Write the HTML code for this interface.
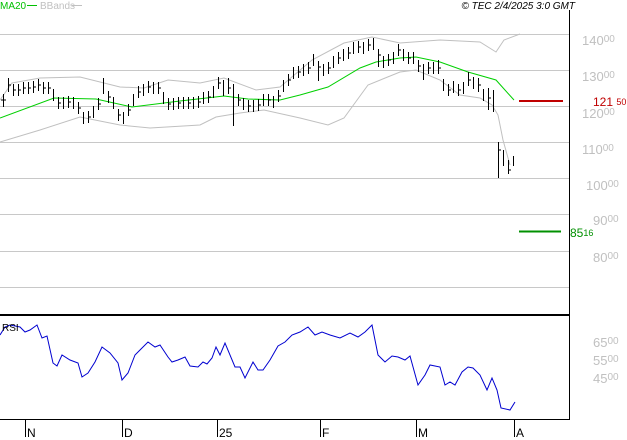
<!DOCTYPE html>
<html><head><meta charset="utf-8"><style>
body{margin:0;background:#fff}
svg{display:block;font-family:"Liberation Sans",sans-serif}
.g{fill:#c0c0c0;font-size:13px}
.s{font-size:10px}
</style></head><body>
<svg width="627" height="440" viewBox="0 0 627 440" xmlns="http://www.w3.org/2000/svg">
<g stroke="#c8c8c8" stroke-width="1">
<line x1="0" y1="34.5" x2="569" y2="34.5"/><line x1="0" y1="70.5" x2="569" y2="70.5"/>
<line x1="0" y1="106.5" x2="569" y2="106.5"/><line x1="0" y1="142.5" x2="569" y2="142.5"/>
<line x1="0" y1="178.5" x2="569" y2="178.5"/><line x1="0" y1="214.5" x2="569" y2="214.5"/>
<line x1="0" y1="251.5" x2="569" y2="251.5"/><line x1="0" y1="287.5" x2="569" y2="287.5"/>
</g>
<line x1="569.5" y1="10" x2="569.5" y2="420" stroke="#000"/>
<line x1="0" y1="315" x2="570" y2="315" stroke="#000" stroke-width="2"/>
<line x1="0" y1="419.5" x2="570" y2="419.5" stroke="#000"/>
<g stroke="#000"><line x1="25.5" y1="419" x2="25.5" y2="437"/><line x1="122.5" y1="419" x2="122.5" y2="437"/><line x1="217.5" y1="419" x2="217.5" y2="437"/><line x1="320.5" y1="419" x2="320.5" y2="437"/><line x1="416.5" y1="419" x2="416.5" y2="437"/><line x1="514.5" y1="419" x2="514.5" y2="437"/></g>
<g font-size="12" fill="#000"><text x="27" y="437">N</text><text x="124" y="437">D</text><text x="219" y="437">25</text><text x="322" y="437">F</text><text x="418" y="437">M</text><text x="516" y="437">A</text></g>
<polyline fill="none" stroke="#c0c0c0" points="0,100 12,83 40,78 80,77 120,87 144,88 168,80 200,83 224,78 256,90 280,87 312,60 344,43 372,37 400,43 440,40 480,42 496,52 504,40 520,34"/>
<polyline fill="none" stroke="#c0c0c0" points="0,142 40,130 80,117 120,125 150,128 200,125 216,117 240,113 264,110 300,118 328,125 344,118 368,85 400,72 416,70 440,80 460,95 480,98 492,105 498,115 503,140 510,165"/>
<polyline fill="none" stroke="#00d000" points="0,118 54,98 96,99 132,107 180,101 224,96 248,99 280,100 300,95 328,87 360,68 376,62 400,58 416,57 440,62 468,72 496,80 514,100"/>
<path fill="none" stroke="#000" d="M3.5 94v13M3 100h-2M8.5 78v14M13.5 84v12M18.5 84v12M23.5 82v12M28.5 82v12M33.5 81v12M38.5 79v12M43.5 82v12M48.5 82v12M53.5 89v12M58.5 97v12M63.5 97v12M68.5 96v12M73.5 97v12M78.5 102v12M83.5 112v12M88.5 111v12M93.5 106v12M98.5 98v12M103.5 78v16M108.5 91v12M113.5 97v12M118.5 109v12M123.5 112v12M128.5 104v12M133.5 94v12M138.5 86v12M143.5 84v12M148.5 81v12M153.5 82v12M158.5 82v12M163.5 92v12M168.5 98v12M173.5 98v12M178.5 97v12M183.5 97v12M188.5 97v12M193.5 97v12M198.5 96v12M203.5 92v12M208.5 91v12M213.5 86v12M218.5 77v12M223.5 80v16M228.5 78v16M233.5 84v42M238.5 94v12M243.5 98v12M248.5 100v12M253.5 100v12M258.5 99v12M263.5 94v12M268.5 94v12M273.5 96v12M278.5 90v12M283.5 80v12M288.5 74v12M293.5 67v12M298.5 66v12M303.5 64v12M308.5 62v12M313.5 54v12M318.5 61v20M323.5 64v12M328.5 62v12M333.5 56v12M338.5 52v12M343.5 49v12M348.5 47v12M353.5 42v12M358.5 41v12M363.5 42v12M368.5 39v12M373.5 38v12M378.5 49v18M383.5 56v12M388.5 54v12M393.5 52v12M398.5 44v12M403.5 49v12M408.5 52v12M413.5 52v12M418.5 60v12M423.5 64v16M428.5 62v12M433.5 62v12M438.5 60v14M443.5 79v12M448.5 84v12M453.5 81v12M458.5 84v12M463.5 82v12M468.5 72v14M473.5 77v12M478.5 78v14M483.5 89v12M488.5 88v22M493.5 90v22M498.5 142v36M503.5 150v16M508.5 160v14M513.5 156v10"/>
<path fill="none" stroke="#000" d="M4 100h2M9 85h2M14 90h2M19 90h2M24 88h2M29 88h2M34 87h2M39 85h2M44 88h2M49 88h2M59 103h2M69 102h2M79 108h2M89 117h2M99 104h2M109 97h2M119 115h2M129 110h2M139 92h2M149 87h2M159 88h2M169 104h2M179 103h2M189 103h2M199 102h2M209 97h2M219 83h2M229 88h2M239 100h2M249 106h2M259 105h2M269 100h2M279 96h2M289 80h2M299 72h2M309 68h2M319 67h2M329 68h2M339 58h2M349 53h2M359 47h2M369 45h2M379 55h2M389 60h2M399 50h2M409 58h2M419 66h2M429 68h2M439 68h2M449 90h2M459 90h2M469 80h2M479 85h2M489 98h2M499 150h2M509 170h2"/>
<polyline fill="none" stroke="#0000d0" points="0,335 5,327 10,325 20,327 25,332 30,330 37,325 42,338 47,336 53,363 57,366 62,355 70,360 78,363 82,377 88,373 95,362 102,347 110,353 118,363 122,380 128,373 135,355 140,350 148,342 155,347 160,345 168,357 172,362 178,360 185,357 190,366 198,367 203,362 207,364 212,358 216,347 220,355 225,343 235,367 240,367 245,378 253,362 258,370 263,370 270,360 278,346 285,342 292,335 300,332 308,327 315,335 322,332 330,335 340,338 350,333 358,337 365,332 372,325 378,355 385,362 392,356 398,357 405,360 410,356 418,385 425,375 430,365 440,367 445,385 450,382 455,385 462,372 468,367 473,368 480,375 487,390 492,378 497,390 501,408 510,410 515,402"/>
<text x="2" y="331" font-size="10" fill="#000">RSI</text>
<line x1="519" y1="101" x2="563" y2="101" stroke="#c00000" stroke-width="2"/>
<line x1="519" y1="231.5" x2="561" y2="231.5" stroke="#009000" stroke-width="2"/>
<text x="593" y="106" font-size="12" fill="#c00000">121 <tspan font-size="9" dy="-1">50</tspan></text>
<text x="570" y="237" font-size="12" fill="#009000">85<tspan font-size="9" dy="-1">16</tspan></text>
<g class="g">
<text x="582" y="45">140<tspan class="s" dy="-3">00</tspan></text>
<text x="582" y="81">130<tspan class="s" dy="-3">00</tspan></text>
<text x="582" y="118">120<tspan class="s" dy="-3">00</tspan></text>
<text x="582" y="154">110<tspan class="s" dy="-3">00</tspan></text>
<text x="586" y="190">100<tspan class="s" dy="-3">00</tspan></text>
<text x="593" y="225">90<tspan class="s" dy="-3">00</tspan></text>
<text x="593" y="262">80<tspan class="s" dy="-3">00</tspan></text>
<text x="593" y="347">65<tspan class="s" dy="-3">00</tspan></text>
<text x="593" y="365">55<tspan class="s" dy="-3">00</tspan></text>
<text x="593" y="383">45<tspan class="s" dy="-3">00</tspan></text>
</g>
<text x="0" y="9" font-size="10" fill="#00c000">MA20</text>
<line x1="27" y1="5.5" x2="37" y2="5.5" stroke="#00c000" stroke-width="1"/>
<text x="40" y="9" font-size="10" fill="#c0c0c0">BBands</text>
<line x1="72" y1="5.5" x2="82" y2="5.5" stroke="#c0c0c0"/>
<text x="575" y="9" font-size="10" font-style="italic" fill="#000" text-anchor="end">© TEC 2/4/2025 3:0 GMT</text>
</svg>
</body></html>
